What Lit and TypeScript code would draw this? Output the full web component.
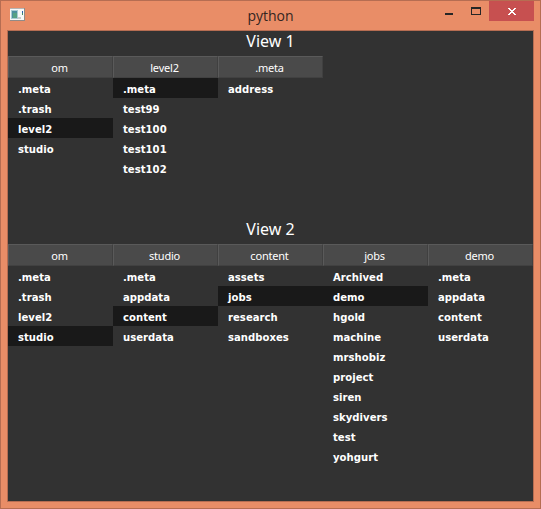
import { LitElement, html, css } from "lit";
import { customElement, property } from "lit/decorators.js";
import { classMap } from "lit/directives/class-map.js";

interface Column {
  title: string;
  items: string[];
  selected?: string;
}

const VIEW_1: Column[] = [
  { title: "om", items: [".meta", ".trash", "level2", "studio"], selected: "level2" },
  { title: "level2", items: [".meta", "test99", "test100", "test101", "test102"], selected: ".meta" },
  { title: ".meta", items: ["address"] },
];

const VIEW_2: Column[] = [
  { title: "om", items: [".meta", ".trash", "level2", "studio"], selected: "studio" },
  { title: "studio", items: [".meta", "appdata", "content", "userdata"], selected: "content" },
  { title: "content", items: ["assets", "jobs", "research", "sandboxes"], selected: "jobs" },
  {
    title: "jobs",
    items: ["Archived", "demo", "hgold", "machine", "mrshobiz", "project", "siren", "skydivers", "test", "yohgurt"],
    selected: "demo",
  },
  { title: "demo", items: [".meta", "appdata", "content", "userdata"] },
];

@customElement("column-view")
class ColumnView extends LitElement {
  @property() heading = "";
  @property({ attribute: false }) columns: Column[] = [];

  static styles = css`
    :host {
      display: block;
      color: #fff;
    }
    .heading {
      height: 25px;
      text-align: center;
      font: 16px/21px "Noto Sans", sans-serif;
    }
    .columns {
      display: flex;
    }
    .column {
      width: 105px;
    }
    .title {
      box-sizing: border-box;
      height: 22px;
      border: 1px solid;
      border-color: #5a5a5a #404040 #414141 #5a5a5a;
      background: #4a4a4a;
      padding-right: 2px;
      text-align: center;
      font: 11px/22px "Noto Sans", sans-serif;
      letter-spacing: -0.2px;
    }
    .item {
      height: 20px;
      padding-left: 10px;
      font: bold 11.2px/23px "DejaVu Sans Condensed", "DejaVu Sans", sans-serif;
      letter-spacing: 0.03px;
      white-space: nowrap;
    }
    .selected {
      background: #191919;
    }
  `;

  render() {
    return html`
      <div class="heading">${this.heading}</div>
      <div class="columns">
        ${this.columns.map(
          (c) => html`<div class="column">
            <div class="title">${c.title}</div>
            ${c.items.map(
              (i) => html`<div class=${classMap({ item: true, selected: i === c.selected })}>${i}</div>`
            )}
          </div>`
        )}
      </div>
    `;
  }
}

@customElement("app-root")
class AppRoot extends LitElement {
  static styles = css`
    :host {
      display: flex;
      flex-direction: column;
      box-sizing: border-box;
      width: 541px;
      height: 509px;
      border: 1px solid #b66d52;
      background: #e98d67;
    }
    .bar {
      display: grid;
      grid-template-columns: 1fr auto 1fr;
      height: 29px;
      flex: none;
    }
    .icon {
      margin: 7px 0 0 9px;
    }
    .caption {
      font: 14px/29px "Open Sans", "Noto Sans", sans-serif;
      color: #33251f;
    }
    .controls {
      display: flex;
      justify-content: flex-end;
      padding-right: 6px;
    }
    .client {
      flex: 1;
      margin: 0 6px 6px;
      border: 1px solid #b66d52;
      background: #323232;
    }
    .first {
      height: 188px;
    }
    svg {
      display: block;
    }
  `;

  render() {
    return html`
      <div class="bar">
        <svg class="icon" width="15" height="13" shape-rendering="crispEdges">
          <rect width="15" height="13" fill="#918b88" />
          <rect y="0" width="14" height="1" fill="#b5b5b4" />
          <rect x="0" y="1" width="14" height="11" fill="#f7f8f8" />
          <rect x="1" y="2" width="7" height="9" fill="#a9cbd4" />
          <rect x="2" y="3" width="5" height="7" fill="#4d8f9e" />
          <rect x="3" y="5" width="4" height="5" fill="#57a184" />
          <rect x="12" y="3" width="1" height="2" fill="#2b5fae" />
          <rect x="12" y="5" width="1" height="2" fill="#438c65" />
          <rect x="8" y="9" width="3" height="2" fill="#cbcbcb" />
        </svg>
        <div class="caption">python</div>
        <div class="controls">
          <svg width="92" height="20" shape-rendering="crispEdges">
            <rect x="3" y="12" width="8" height="2" fill="#262626" />
            <path d="M29 6h10v8h-10z M30 8v5h8v-5z" fill="#262626" fill-rule="evenodd" />
            <rect x="47" y="0" width="45" height="20" fill="#c75050" />
            <path
              d="M66 7h2v1h1v1h2v-1h1v-1h2v1h-1v1h-1v1h-1v1h1v1h1v1h1v1h-2v-1h-1v-1h-2v1h-1v1h-2v-1h1v-1h1v-1h1v-1h-1v-1h-1v-1h-1z"
              fill="#fff"
            />
          </svg>
        </div>
      </div>
      <div class="client">
        <column-view class="first" heading="View 1" .columns=${VIEW_1}></column-view>
        <column-view heading="View 2" .columns=${VIEW_2}></column-view>
      </div>
    `;
  }
}
